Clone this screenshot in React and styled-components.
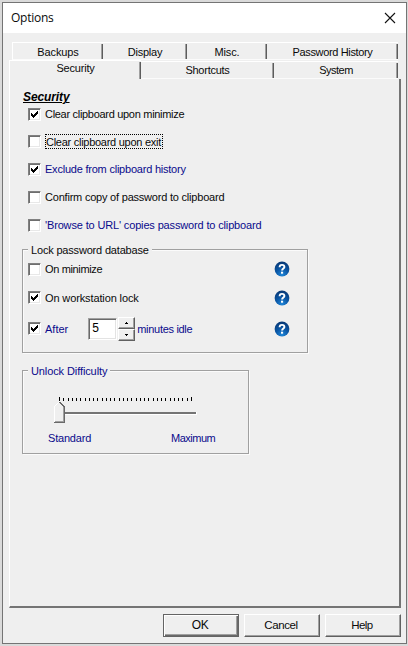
import React from "react";
import styled, { createGlobalStyle, css } from "styled-components";

const Global = createGlobalStyle`
  *, *::before, *::after { box-sizing: border-box; }
  html, body { margin: 0; background: #d9d9d9; }
`;

const Desktop = styled.div`
  width: 408px;
  height: 646px;
  padding: 2px 1px 2px 2px;
  background: #dadada;
  overflow: hidden;
  font: 11px/14px "Liberation Sans", Arial, sans-serif;
  color: #000;
`;
const Dialog = styled.div`
  width: 405px;
  height: 642px;
  border: 1px solid #747474;
  background: #efefef;
  display: flex;
  flex-direction: column;
`;
const TitleBar = styled.header`
  height: 30px;
  flex: none;
  background: #fff;
  display: flex;
  justify-content: space-between;
  align-items: center;
  padding: 0 10px 0 8px;
  font: 12px/16px "Open Sans", "Noto Sans", sans-serif;
`;
const Label = styled.span`
  white-space: pre;
  letter-spacing: ${(p) => p.$ls || 0}px;
  color: ${(p) => (p.$blue ? "#0a0a8c" : "#0a0a0a")};
`;
const TabRow = styled.div`
  display: flex;
  align-items: flex-end;
  height: ${(p) => p.$h}px;
  padding-left: ${(p) => p.$indent}px;
  flex: none;
`;
const Tab = styled.div`
  width: ${(p) => p.$w}px;
  height: ${(p) => p.$h || 18}px;
  border-top: 1px solid #fff;
  border-left: ${(p) => (p.$first ? "1px solid #fff" : "0")};
  border-bottom: ${(p) => (p.$active ? "0" : "1px solid #fbfbfb")};
  position: relative;
  text-align: center;
  padding-top: ${(p) => p.$pt || 0}px;
  &::after {
    content: "";
    position: absolute;
    right: 0;
    top: 1px;
    bottom: 0;
    width: 2px;
    border-left: 1px solid #a0a0a0;
    border-right: 1px solid #5c5c5c;
  }
`;
const Panel = styled.main`
  margin-left: 6px;
  width: 392px;
  height: 529px;
  flex: none;
  border-left: 1px solid #fff;
  border-right: 2px solid #747474;
  border-bottom: 2px solid #747474;
  padding: 11px 0 0 12px;
`;
const Heading = styled.h1`
  margin: 0 0 0 1px;
  height: 10px;
  font: italic bold 12px/14px "Liberation Sans", Arial, sans-serif;
  text-decoration: underline;
  text-decoration-thickness: 1px;
  letter-spacing: -0.1px;
`;
const Options = styled.div`
  padding-bottom: 10px;
`;
const Row = styled.div`
  display: flex;
  align-items: center;
  height: ${(p) => p.$h}px;
  padding-left: ${(p) => p.$indent}px;
`;
const Box = styled.span`
  width: 13px;
  height: 13px;
  flex: none;
  margin-right: 4px;
  background: #fff;
  border: 1px solid #808080;
  border-right-color: #fff;
  border-bottom-color: #fff;
  box-shadow: inset 1px 1px #6e6e6e, inset -1px -1px #e8e8e8;
  & > svg { display: block; }
`;
const Focus = styled.span`
  display: flex;
  height: 15px;
  width: 118px;
  border: 1px dotted #000;
  line-height: 14px;
`;
const Group = styled.section`
  width: ${(p) => p.$w}px;
  height: ${(p) => p.$h}px;
  margin-bottom: ${(p) => p.$mb || 0}px;
  border: 1px solid #a0a0a0;
  box-shadow: 1px 1px #fbfbfb, inset 1px 1px #fbfbfb;
  display: flex;
  flex-direction: column;
`;
const Legend = styled.div`
  align-self: flex-start;
  height: 13px;
  margin: -7px 0 0 5px;
  padding: 0 3px;
  background: #efefef;
`;
const Spacer = styled.span`
  flex: 1;
`;
const HelpSlot = styled.span`
  width: 16px;
  height: 16px;
  margin-right: 17px;
  flex: none;
  & > svg { display: block; }
`;
const Edit = styled.span`
  width: 29px;
  height: 22px;
  margin-left: 20px;
  background: #fff;
  border: 1px solid #a0a0a0;
  border-right-color: #fff;
  border-bottom-color: #fff;
  box-shadow: inset 1px 1px #696969, inset -1px -1px #e3e3e3;
  padding: 2px 0 0 3px;
  font-size: 12px;
  line-height: 15px;
`;
const Spin = styled.span`
  display: flex;
  flex-direction: column;
  width: 17px;
  height: 24px;
  margin: 0 2px 0 1px;
`;
const raised = css`
  border: 1px solid #fff;
  border-right-color: #606060;
  border-bottom-color: #606060;
  box-shadow: inset -1px -1px #a0a0a0;
`;
const SpinButton = styled.span`
  ${raised}
  height: 12px;
  display: flex;
  align-items: center;
  justify-content: center;
`;
const Slider = styled.div`
  height: 31px;
  margin: 18px 0 0 29px;
`;
const Ends = styled.div`
  display: flex;
  padding: 5px 0 0 25px;
  & > :first-child { width: 123px; }
`;
const Footer = styled.footer`
  display: flex;
  gap: 5px;
  padding: 6px 5px 0 0;
  justify-content: flex-end;
`;
const Button = styled.button`
  ${raised}
  width: 76px;
  height: 23px;
  padding: 0 2px 2px 0;
  background: #efefef;
  font: ${(p) => (p.$default ? 12 : 11.5)}px/14px "Liberation Sans", Arial, sans-serif;
  ${(p) => p.$default && css`
    border: 1px solid #646464;
    box-shadow: inset 1px 1px #fff, inset -1px -1px #696969, inset -2px -2px #a0a0a0;
  `}
`;

const Check = ({ on }) => (
  <Box>
    {on && (
      <svg width="11" height="11" viewBox="0 0 11 11" shapeRendering="crispEdges">
        <path d="M2 4h1v1h1v1h1v-1h1v-1h1v-1h1v-1h1v3h-1v1h-1v1h-1v1h-1v1h-1v-1h-1v-1h-1z" fill="#000" />
      </svg>
    )}
  </Box>
);

const HelpIcon = () => (
  <HelpSlot>
    <svg width="16" height="16" viewBox="0 0 16 16">
      <defs>
        <radialGradient id="ball" cx="0.5" cy="0.9" r="0.85">
          <stop offset="0" stopColor="#1f86d8" />
          <stop offset="0.5" stopColor="#0a57a6" />
          <stop offset="1" stopColor="#083a78" />
        </radialGradient>
      </defs>
      <circle cx="8" cy="8" r="7.4" fill="url(#ball)" />
      <path d="M5.6 6.3C5.6 4.600 6.600 3.900 8 3.900s2.400.8 2.400 2.100c0 1.500-2.300 1.700-2.300 3.500" fill="none" stroke="#fff" strokeWidth="1.9" />
      <rect x="7" y="10.700" width="2.100" height="2" fill="#fff" />
    </svg>
  </HelpSlot>
);

const options = [
  { text: "Clear clipboard upon minimize", on: true, h: 28, ls: -0.3 },
  { text: "Clear clipboard upon exit", focus: true, h: 27, ls: -0.27 },
  { text: "Exclude from clipboard history", on: true, blue: true, h: 28, ls: -0.22 },
  { text: "Confirm copy of password to clipboard", h: 28, ls: -0.21 },
  { text: "'Browse to URL' copies password to clipboard", blue: true, h: 28, ls: -0.15 },
];
const ticks = Array.from({ length: 32 }, (_, i) => Math.round((i * 132) / 31));

export default function App() {
  return (
    <Desktop>
      <Global />
      <Dialog>
        <TitleBar>
          <Label $ls={-0.25}>Options</Label>
          <svg width="12" height="12" viewBox="0 0 12 12">
            <path d="M1 1l10 10M11 1L1 11" stroke="#111" strokeWidth="1.1" />
          </svg>
        </TitleBar>
        <TabRow $h={27} $indent={9}>
          <Tab $w={91} $pt={2} $first><Label $ls={-0.1}>Backups</Label></Tab>
          <Tab $w={84} $pt={2}><Label $ls={-0.25}>Display</Label></Tab>
          <Tab $w={80} $pt={2}><Label $ls={-0.1}>Misc.</Label></Tab>
          <Tab $w={131} $pt={2}><Label $ls={-0.35}>Password History</Label></Tab>
        </TabRow>
        <TabRow $h={19} $indent={6}>
          <Tab $w={132} $h={19} $first $active><Label $ls={-0.2}>Security</Label></Tab>
          <Tab $w={133} $pt={1}><Label $ls={-0.25}>Shortcuts</Label></Tab>
          <Tab $w={124} $pt={1}><Label $ls={-0.5}>System</Label></Tab>
        </TabRow>
        <Panel>
          <Heading>Security</Heading>
          <Options>
            {options.map((o) => (
              <Row key={o.text} $h={o.h} $indent={6}>
                <Check on={o.on} />
                {o.focus
                  ? <Focus><Label $ls={o.ls}>{o.text}</Label></Focus>
                  : <Label $blue={o.blue} $ls={o.ls}>{o.text}</Label>}
              </Row>
            ))}
          </Options>
          <Group $w={286} $h={104} $mb={17}>
            <Legend><Label $ls={-0.18}>Lock password database</Label></Legend>
            <Row $h={26} $indent={5}><Check /><Label $ls={-0.35}>On minimize</Label><Spacer /><HelpIcon /></Row>
            <Row $h={31} $indent={5}><Check on /><Label $ls={-0.12}>On workstation lock</Label><Spacer /><HelpIcon /></Row>
            <Row $h={31} $indent={5}>
              <Check on /><Label $blue>After</Label>
              <Edit>5</Edit>
              <Spin>
                <SpinButton><svg width="3" height="2"><path d="M1 0h1v1h1v1h-3v-1h1z" /></svg></SpinButton>
                <SpinButton><svg width="3" height="2"><path d="M0 0h3v1h-1v1h-1v-1h-1z" /></svg></SpinButton>
              </Spin>
              <Label $blue $ls={-0.3}>minutes idle</Label>
              <Spacer /><HelpIcon />
            </Row>
          </Group>
          <Group $w={227} $h={84}>
            <Legend><Label $blue $ls={-0.1}>Unlock Difficulty</Label></Legend>
            <Slider>
              <svg width="150" height="31" viewBox="0 0 150 31" shapeRendering="crispEdges">
                {ticks.map((x, i) => (
                  <rect key={x} x={x + 7} y={i % 31 ? 3 : 2} width="1" height={i % 31 ? 3 : 4} />
                ))}
                <rect x="7" y="17" width="137" height="2" fill="#747474" />
                <path d="M7 19.5h137.500v-3" fill="none" stroke="#fff" />
                <path d="M2 27V11l5-5 5 5v16z" fill="#efefef" />
                <path d="M2.500 27V11.500l5-5" fill="none" stroke="#fff" />
                <path d="M7.500 7l5 5v15.500H2" fill="none" stroke="#696969" />
                <path d="M11.500 12v14.500H3" fill="none" stroke="#a0a0a0" />
              </svg>
            </Slider>
            <Ends><Label $blue $ls={-0.2}>Standard</Label><Label $blue $ls={-0.5}>Maximum</Label></Ends>
          </Group>
        </Panel>
        <Footer>
          <Button $default><Label $ls={-0.5}>OK</Label></Button>
          <Button><Label $ls={-0.4}>Cancel</Label></Button>
          <Button><Label $ls={-0.6}>Help</Label></Button>
        </Footer>
      </Dialog>
    </Desktop>
  );
}
